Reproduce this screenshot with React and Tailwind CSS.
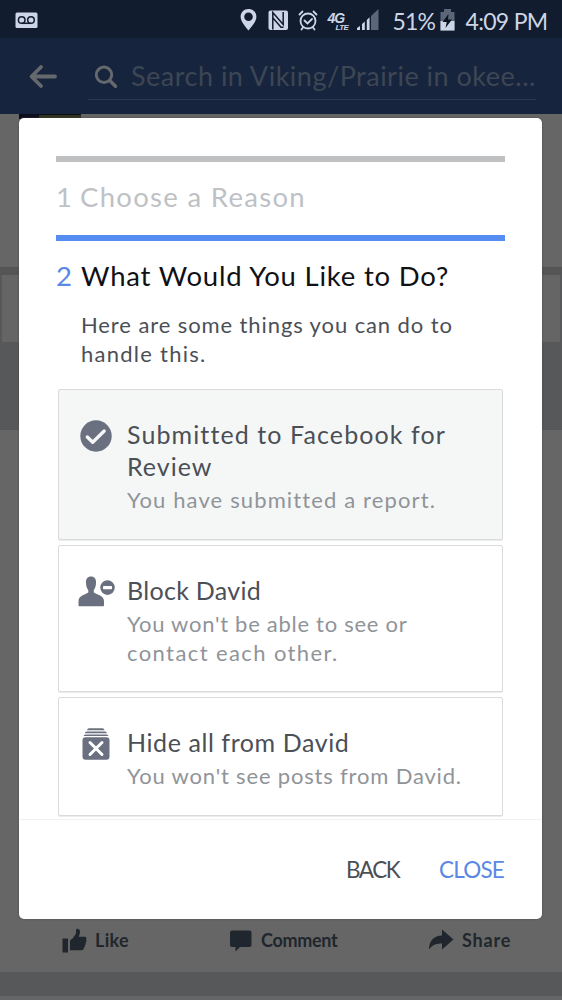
import React from "react";

function StatusBar() {
  return (
    <div className="flex h-[38px] items-center bg-[#111c2e] text-[#cdd6e6]">
      <svg className="ml-[15px] mt-[2px] h-[17px] w-[23px]" viewBox="0 0 23 17">
        <rect x="0.5" y="0.5" width="22" height="15.5" rx="1.5" fill="#cdd6e6" />
        <g fill="none" stroke="#111c2e" strokeWidth="1.5">
          <circle cx="6.7" cy="8" r="3.3" />
          <circle cx="16" cy="8" r="3.3" />
          <path d="M6.7 11.3H16" />
        </g>
      </svg>
      <svg className="ml-[202px] mt-[2px] h-[22px] w-[17px]" viewBox="0 0 17 22">
        <path fill="#cdd6e6" fillRule="evenodd" d="M8.5 0C3.8 0 .6 3.5.6 7.7c0 4.800 4.500 9.500 7.900 13.900 3.400-4.400 7.900-9.100 7.900-13.900C16.400 3.500 13.200 0 8.500 0Zm0 3.400a4.300 4.300 0 1 1 0 8.600 4.300 4.300 0 0 1 0-8.600Z" />
      </svg>
      <svg className="ml-[10.5px] mt-[2px] h-[21px] w-[21px]" viewBox="0 0 21 21">
        <rect x="0.5" y="0.5" width="19.5" height="19.5" rx="2" fill="#cdd6e6" />
        <path d="M4.800 19.500V2.500l10.400 12V2M5 8l8 9.200h2.500" fill="none" stroke="#111c2e" strokeWidth="1.5" />
      </svg>
      <svg className="ml-[9px] mt-[2px] h-[21px] w-[20px]" viewBox="0 0 20 21" fill="none" stroke="#cdd6e6" strokeWidth="1.8" strokeLinecap="round">
        <circle cx="10" cy="11" r="7.5" />
        <path d="M6.500 10.500l3 3 4.500-4.500M1.500 4.500l3-3M18.500 4.500l-3-3M5 17.500l-1.500 2M15 17.500l1.500 2" />
      </svg>
      <div className="ml-[10px] mt-[6px] flex h-[20px] w-[23px] flex-col font-['Liberation_Sans'] font-bold italic">
        <span className="h-[12px] text-[14px] leading-[12px] tracking-[-1px]">4G</span>
        <span className="h-[8px] pl-[8px] text-[8px] leading-[8px] tracking-[-0.6px]">LTE</span>
      </div>
      <svg className="ml-[6px] mt-[2px] h-[22px] w-[22px]" viewBox="0 0 22 22">
        <path d="M0 21v-2l3-2v4zM5 21v-6l2.800-2.500V21zM9.800 21V11l2.800-2.800V21z" fill="#cdd6e6" />
        <path d="M14 21V7L21.500 0v21z" fill="#5b6779" />
      </svg>
      <span className="ml-[14px] mt-[3px] w-[43px] whitespace-nowrap font-[Lato] text-[23px] leading-[28px] tracking-[-0.9px]">51%</span>
      <svg className="ml-[4px] mt-[2px] h-[22px] w-[15px]" viewBox="0 0 15 22">
        <path d="M4 0h7v3h3.500v18.500H0.500V3H4z" fill="#5b6779" />
        <path d="M0.500 12h14v9.500h-14z" fill="#cdd6e6" />
        <path d="M8.500 5L2.500 13h4.200L5.500 19l6.500-8.500H8z" fill="#0b1320" />
      </svg>
      <span className="ml-[11px] mt-[3px] whitespace-nowrap font-[Lato] text-[23px] leading-[28px] tracking-[-0.7px]">4:09 PM</span>
    </div>
  );
}

function SearchHeader() {
  return (
    <div className="flex h-[76px] bg-[#17243d]">
      <svg className="ml-[28px] mt-[26px] h-[25px] w-[30px]" viewBox="0 0 30 25" fill="none" stroke="#65686c" strokeWidth="3.8" strokeLinecap="round" strokeLinejoin="round">
        <path d="M13 3L3.500 12.500 13 22M4 12.500h23" />
      </svg>
      <div className="ml-[30px] flex h-[62px] w-[448px] border-b border-[#2a3850]">
        <svg className="ml-[6px] mt-[27px] h-[24px] w-[24px]" viewBox="0 0 24 24" fill="none" stroke="#65686c" strokeWidth="3" strokeLinecap="round">
          <circle cx="10" cy="9.8" r="7.7" />
          <path d="M15.800 15.500l5.700 5.700" strokeWidth="3.5" />
        </svg>
        <span className="ml-[13px] mt-[22px] whitespace-nowrap font-[Lato] text-[27px] leading-[32px] tracking-[0.5px] text-[#3d4654]">
          Search in Viking/Prairie in okee...
        </span>
      </div>
    </div>
  );
}

function PostActions() {
  return (
    <div className="flex h-[64px] items-center font-[Lato] text-[18px] font-bold leading-[24px] text-[#20262d]">
      <svg className="ml-[62px] h-[25px] w-[26px]" viewBox="0 0 26 25" fill="#20262d">
        <path d="M0.500 10.500h5.500V24.500H0.500zM8 12.500l3-2.500 3-4.500V2c0-2 4-1.800 4 1.500 0 2-.7 3.800-1.200 5.200h6c1.800 0 2.200 2 1.200 3 .8 1 .5 2.300-.4 2.800.5 1.200 0 2.300-.8 2.700.3 1.200-.2 2.200-1 2.600.2 1.500-.8 2.500-2 2.500H8z" />
      </svg>
      <span className="ml-[7px] w-[135px] tracking-[0.3px]">Like</span>
      <svg className="h-[24px] w-[22px]" viewBox="0 0 22 24" fill="#20262d">
        <path d="M2 2.500h17.500Q21.500 2.500 21.500 4.500V17Q21.500 19 19.500 19H10l-4.500 4.500V19H2Q0 19 0 17V4.500Q0 2.500 2 2.500Z" />
      </svg>
      <span className="ml-[9px] w-[167px] tracking-[-0.3px]">Comment</span>
      <svg className="h-[22px] w-[26px]" viewBox="0 0 26 22" fill="#20262d">
        <path d="M14 0.500L25.500 10.500 14 20.500v-6C8 14 4 16 1 20.500 1 12 6 6.500 14 6.500Z" />
      </svg>
      <span className="ml-[8px] tracking-[0.8px]">Share</span>
    </div>
  );
}

function Backdrop() {
  return (
    <div className="flex h-[1000px] flex-col bg-[#666666]">
      <StatusBar />
      <SearchHeader />
      <div className="h-[153px] pl-[19px]">
        <div className="flex h-[5px] w-[62px] bg-[#0c0e1d]">
          <div className="ml-[20px] mt-[1px] h-[4px] w-[42px] bg-[#32341f]" />
        </div>
      </div>
      <div className="h-[8px] bg-[#555556]" />
      <div className="h-[67px] border-x-2 border-[#57585a] bg-[#656565]" />
      <div className="h-[88px] bg-[#56585a]" />
      <div className="h-[478px]" />
      <PostActions />
      <div className="h-[24px] bg-[#57585a]" />
    </div>
  );
}

function CheckIcon() {
  return (
    <svg className="h-[32px] w-[32px]" viewBox="0 0 32 32">
      <circle cx="16" cy="16" r="15.7" fill="#6a7080" />
      <path d="M7.300 17l5.400 5.200L24.200 11" fill="none" stroke="#f5f7f7" strokeWidth="3.3" strokeLinecap="round" strokeLinejoin="round" />
    </svg>
  );
}

function BlockIcon() {
  return (
    <svg className="h-[31px] w-[38px]" viewBox="0 0 38 31">
      <path d="M13 0.500c3.500 0 5.300 2.500 5 6.500-.1 3.500-1 5.500-2.200 7v2.500c2 1.500 10.200 3 10.200 8.500v4.500q0 .7-.8.700H1.300q-.8 0-.8-.7V25c0-5.500 8-7 9.800-8.500V14C9 12.500 8.100 10.500 8 7 7.700 3 9.500.5 13 .5Z" fill="#6a7080" />
      <circle cx="29.5" cy="11.6" r="7.3" fill="#6a7080" />
      <rect x="25" y="10" width="9" height="3.2" rx="0.8" fill="#fff" />
    </svg>
  );
}

function HideIcon() {
  return (
    <svg className="h-[32px] w-[28px]" viewBox="0 0 28 32">
      <path d="M5 2.200Q5.500.3 7 .3H20.500q1.500 0 2.100 1.900zM2.800 5.200Q3.200 3.500 4.700 3.500H23q1.500 0 2 1.700zM1.500 8Q2 6.400 3.500 6.400h21q1.500 0 2 1.600z" fill="#6a7080" />
      <rect x="0.5" y="9.2" width="27" height="22.600" rx="3" fill="#6a7080" />
      <path d="M8 14.500l12 12M20 14.500l-12 12" stroke="#fff" strokeWidth="3" strokeLinecap="round" />
    </svg>
  );
}

function Option({ className, icon, title, children }) {
  return (
    <div className={"flex rounded-[2px] border border-[#d9dbdc] pt-[28px] font-[Lato] shadow-[0_1px_0_#ececec] " + className}>
      <div className="w-[68px] shrink-0">{icon}</div>
      <div className="whitespace-nowrap">
        <div className="text-[25px] leading-[32px] text-[#4b4f56]">{title}</div>
        <div className="mt-[3px] text-[22px] leading-[29px] text-[#909499]">{children}</div>
      </div>
    </div>
  );
}

function Dialog() {
  return (
    <div className="absolute left-[19px] top-[118px] flex h-[801px] w-[523px] flex-col rounded-[5px] bg-white font-[Lato] shadow-[0_0_2px_#444]">
      <div className="flex h-[701px] flex-col overflow-hidden pl-[37px] pr-[37px] pt-[38px]">
        <div className="h-[6px] shrink-0 bg-[#bec0c1]" />
        <div className="flex h-[73px] shrink-0 items-center whitespace-nowrap pb-[3px] text-[27.5px] leading-[32px] text-[#bec1c5]">
          <span className="w-[24px]">1</span>
          <span className="tracking-[1.3px]">Choose a Reason</span>
        </div>
        <div className="h-[6px] shrink-0 bg-[#568df3]" />
        <div className="mt-[19px] flex h-[32px] shrink-0 whitespace-nowrap text-[27.5px] leading-[32px]">
          <span className="w-[25px] text-[#5b87e5]">2</span>
          <span className="tracking-[0.8px] text-[#101114]">What Would You Like to Do?</span>
        </div>
        <div className="ml-[25px] mt-[18px] whitespace-nowrap text-[22px] leading-[29px] text-[#4b4f56]">
          <div className="tracking-[0.9px]">Here are some things you can do to</div>
          <div className="tracking-[1.25px]">handle this.</div>
        </div>
        <div className="mx-[2px] mt-[21px] flex flex-col gap-[5px]">
          <Option
            className="h-[151px] bg-[#f5f7f7]"
            icon={<div className="ml-[21px] mt-[2px]"><CheckIcon /></div>}
            title={<><div className="tracking-[1.1px]">Submitted to Facebook for</div><div className="tracking-[1px]">Review</div></>}
          >
            <div className="tracking-[1.13px]">You have submitted a report.</div>
          </Option>
          <Option
            className="h-[147px] bg-white"
            icon={<div className="ml-[19px] mt-[2px]"><BlockIcon /></div>}
            title={<div className="tracking-[0.3px]">Block David</div>}
          >
            <div className="tracking-[0.72px]">You won't be able to see or</div>
            <div className="tracking-[1.4px]">contact each other.</div>
          </Option>
          <Option
            className="h-[119px] bg-white"
            icon={<div className="ml-[23px] mt-[2px]"><HideIcon /></div>}
            title={<div className="tracking-[0.58px]">Hide all from David</div>}
          >
            <div className="tracking-[0.82px]">You won't see posts from David.</div>
          </Option>
        </div>
      </div>
      <div className="flex h-[100px] whitespace-nowrap border-t border-[#f0f1f1] pl-[327px] pt-[34px] text-[22.5px] leading-[32px]">
        <span className="w-[93px] tracking-[-1.5px] text-[#4b4f56]">BACK</span>
        <span className="tracking-[-0.8px] text-[#5b87e5]">CLOSE</span>
      </div>
    </div>
  );
}

export default function App() {
  return (
    <div className="relative h-[1000px] w-[562px] overflow-hidden">
      <Backdrop />
      <Dialog />
    </div>
  );
}
